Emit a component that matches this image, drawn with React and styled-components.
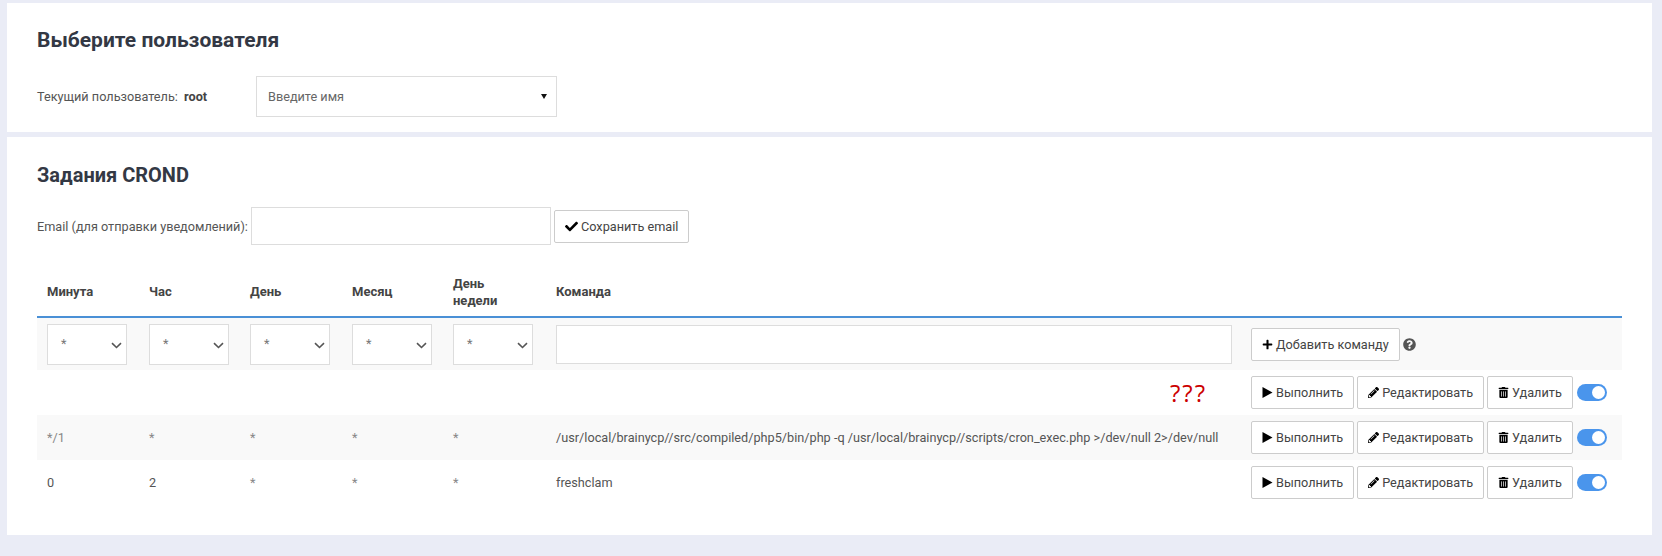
import styled, { createGlobalStyle } from "styled-components";
import { FaPencilAlt, FaTrashAlt, FaCheck, FaPlus, FaQuestionCircle } from "react-icons/fa";

const GlobalStyle = createGlobalStyle`
  html, body {
    margin: 0;
    padding: 0;
    background: #eaecf6;
    font-family: Roboto, "Noto Sans", sans-serif;
    font-size: 12.7px;
    color: #555;
  }
  * { box-sizing: border-box; }
`;

const Page = styled.div`
  width: 1662px;
  height: 556px;
  padding: 3px 10px 0 7px;
  overflow: hidden;
`;

const Card = styled.section`
  background: #fff;
  padding: 0 30px;
  height: ${(props) => props.$height}px;
  margin-bottom: 5px;
`;

const Title = styled.h3`
  margin: 0;
  padding-top: ${(props) => props.$top}px;
  font-size: ${(props) => props.$size}px;
  line-height: 24px;
  font-weight: 700;
  color: #333844;
`;

const UserRow = styled.div`
  display: flex;
  align-items: center;
  margin-top: 24px;
`;

const UserLabel = styled.span`
  width: 219px;
  b {
    margin-left: 3px;
    color: #444;
  }
`;

const UserSelect = styled.div`
  width: 301px;
  height: 41px;
  border: 1px solid #ddd;
  padding: 0 9px 0 11px;
  display: flex;
  align-items: center;
  justify-content: space-between;
  color: #666;
`;

const Caret = styled.i`
  width: 0;
  height: 0;
  border-left: 3px solid transparent;
  border-right: 3px solid transparent;
  border-top: 5px solid #111;
`;

const EmailRow = styled.div`
  display: flex;
  align-items: center;
  margin-top: 20px;
`;

const EmailLabel = styled.span`
  width: 214px;
`;

const Input = styled.div`
  width: ${(props) => props.$width}px;
  height: ${(props) => props.$height}px;
  border: 1px solid #ddd;
  background: #fff;
  margin-right: ${(props) => props.$gap || 0}px;
`;

const Button = styled.button`
  height: 33px;
  padding: 0 10px;
  display: inline-flex;
  align-items: center;
  gap: 3px;
  border: 1px solid #ccc;
  border-radius: 2px;
  background: #fff;
  color: #444;
  font: 12.7px Roboto, sans-serif;
  white-space: nowrap;
  svg {
    color: #000;
    font-size: 11px;
    flex: none;
  }
`;

const CheckIcon = styled(FaCheck)`
  && {
    font-size: 13px;
  }
`;

const Table = styled.div`
  margin-top: 22px;
`;

const Grid = styled.div`
  display: grid;
  grid-template-columns: 102px 101px 102px 101px 103px 695px 1fr;
  align-items: center;
  padding-left: 10px;
`;

const Head = styled(Grid)`
  height: 51px;
  border-bottom: 2px solid #4a90d6;
  font-size: 13px;
  font-weight: 700;
  color: #444;
  line-height: 17px;
`;

const HeadCell = styled.span`
  max-width: 60px;
  white-space: ${(props) => (props.$wide ? "nowrap" : "normal")};
`;

const Row = styled(Grid)`
  height: ${(props) => props.$height || 45}px;
  background: ${(props) => (props.$shaded ? "#f9f9f9" : "#fff")};
`;

const StarSelect = styled.div`
  width: 80px;
  height: 41px;
  border: 1px solid #ddd;
  background: #fff;
  display: flex;
  align-items: center;
  justify-content: space-between;
  padding: 0 4px 2px 13px;
  color: #777;
  svg {
    display: block;
    margin-top: 5px;
  }
`;

const Actions = styled.div`
  display: flex;
  align-items: center;
  gap: 3px;
`;

const Help = styled.span`
  color: #555;
  display: flex;
  font-size: 13px;
`;

const Switch = styled.span`
  width: 30px;
  height: 17px;
  margin-left: 1px;
  padding: 2px;
  border-radius: 9px;
  background: #4a95ec;
  display: flex;
  justify-content: flex-end;
  &::after {
    content: "";
    width: 13px;
    height: 13px;
    border-radius: 50%;
    background: #fff;
  }
`;

const Cell = styled.span`
  color: ${(props) => (props.$muted ? "#888" : "#555")};
`;

const Marks = styled.span`
  display: block;
  text-align: right;
  padding-right: 44px;
  color: #c00;
  font-size: 24px;
  letter-spacing: 2px;
  font-family: "Open Sans", sans-serif;
`;

const Chevron = () => (
  <svg width="11" height="7" viewBox="0 0 11 7" fill="none" stroke="#555" strokeWidth="1.6">
    <path d="M1 1.2 5.5 5.5 10 1.2" />
  </svg>
);

const PlayIcon = () => (
  <svg width="11" height="11" viewBox="0 0 11 11" fill="currentColor">
    <path d="M0.5 0 10.5 5.5 0.5 11z" />
  </svg>
);

const heads = ["Минута", "Час", "День", "Месяц", "День недели", "Команда"];

const rows = [
  { values: ["", "", "", "", ""], command: <Marks>???</Marks> },
  {
    values: ["*/1", "*", "*", "*", "*"],
    command: "/usr/local/brainycp//src/compiled/php5/bin/php -q /usr/local/brainycp//scripts/cron_exec.php >/dev/null 2>/dev/null",
    shaded: true,
  },
  { values: ["0", "2", "*", "*", "*"], command: "freshclam" },
];

const App = () => (
  <Page>
    <GlobalStyle />
    <Card $height={129}>
      <Title $top={25} $size={21}>Выберите пользователя</Title>
      <UserRow>
        <UserLabel>
          Текущий пользователь: <b>root</b>
        </UserLabel>
        <UserSelect>
          Введите имя
          <Caret />
        </UserSelect>
      </UserRow>
    </Card>
    <Card $height={398}>
      <Title $top={26} $size={20}>Задания CROND</Title>
      <EmailRow>
        <EmailLabel>Email (для отправки уведомлений):</EmailLabel>
        <Input $width={300} $height={38} $gap={3} />
        <Button>
          <CheckIcon /> Сохранить email
        </Button>
      </EmailRow>
      <Table>
        <Head>
          {heads.map((h) => (
            <HeadCell key={h} $wide={h === "Команда"}>
              {h}
            </HeadCell>
          ))}
        </Head>
        <Row $shaded $height={52}>
          {heads.slice(0, 5).map((h) => (
            <StarSelect key={h}>
              *
              <Chevron />
            </StarSelect>
          ))}
          <Input $width={676} $height={39} />
          <Actions>
            <Button>
              <FaPlus /> Добавить команду
            </Button>
            <Help>
              <FaQuestionCircle />
            </Help>
          </Actions>
        </Row>
        {rows.map((r, i) => (
          <Row key={i} $shaded={r.shaded}>
            {r.values.map((v, j) => (
              <Cell key={j} $muted={v === "*" || v === "*/1"}>
                {v}
              </Cell>
            ))}
            <Cell>{r.command}</Cell>
            <Actions>
              <Button>
                <PlayIcon /> Выполнить
              </Button>
              <Button>
                <FaPencilAlt /> Редактировать
              </Button>
              <Button>
                <FaTrashAlt /> Удалить
              </Button>
              <Switch />
            </Actions>
          </Row>
        ))}
      </Table>
    </Card>
  </Page>
);

export default App;
